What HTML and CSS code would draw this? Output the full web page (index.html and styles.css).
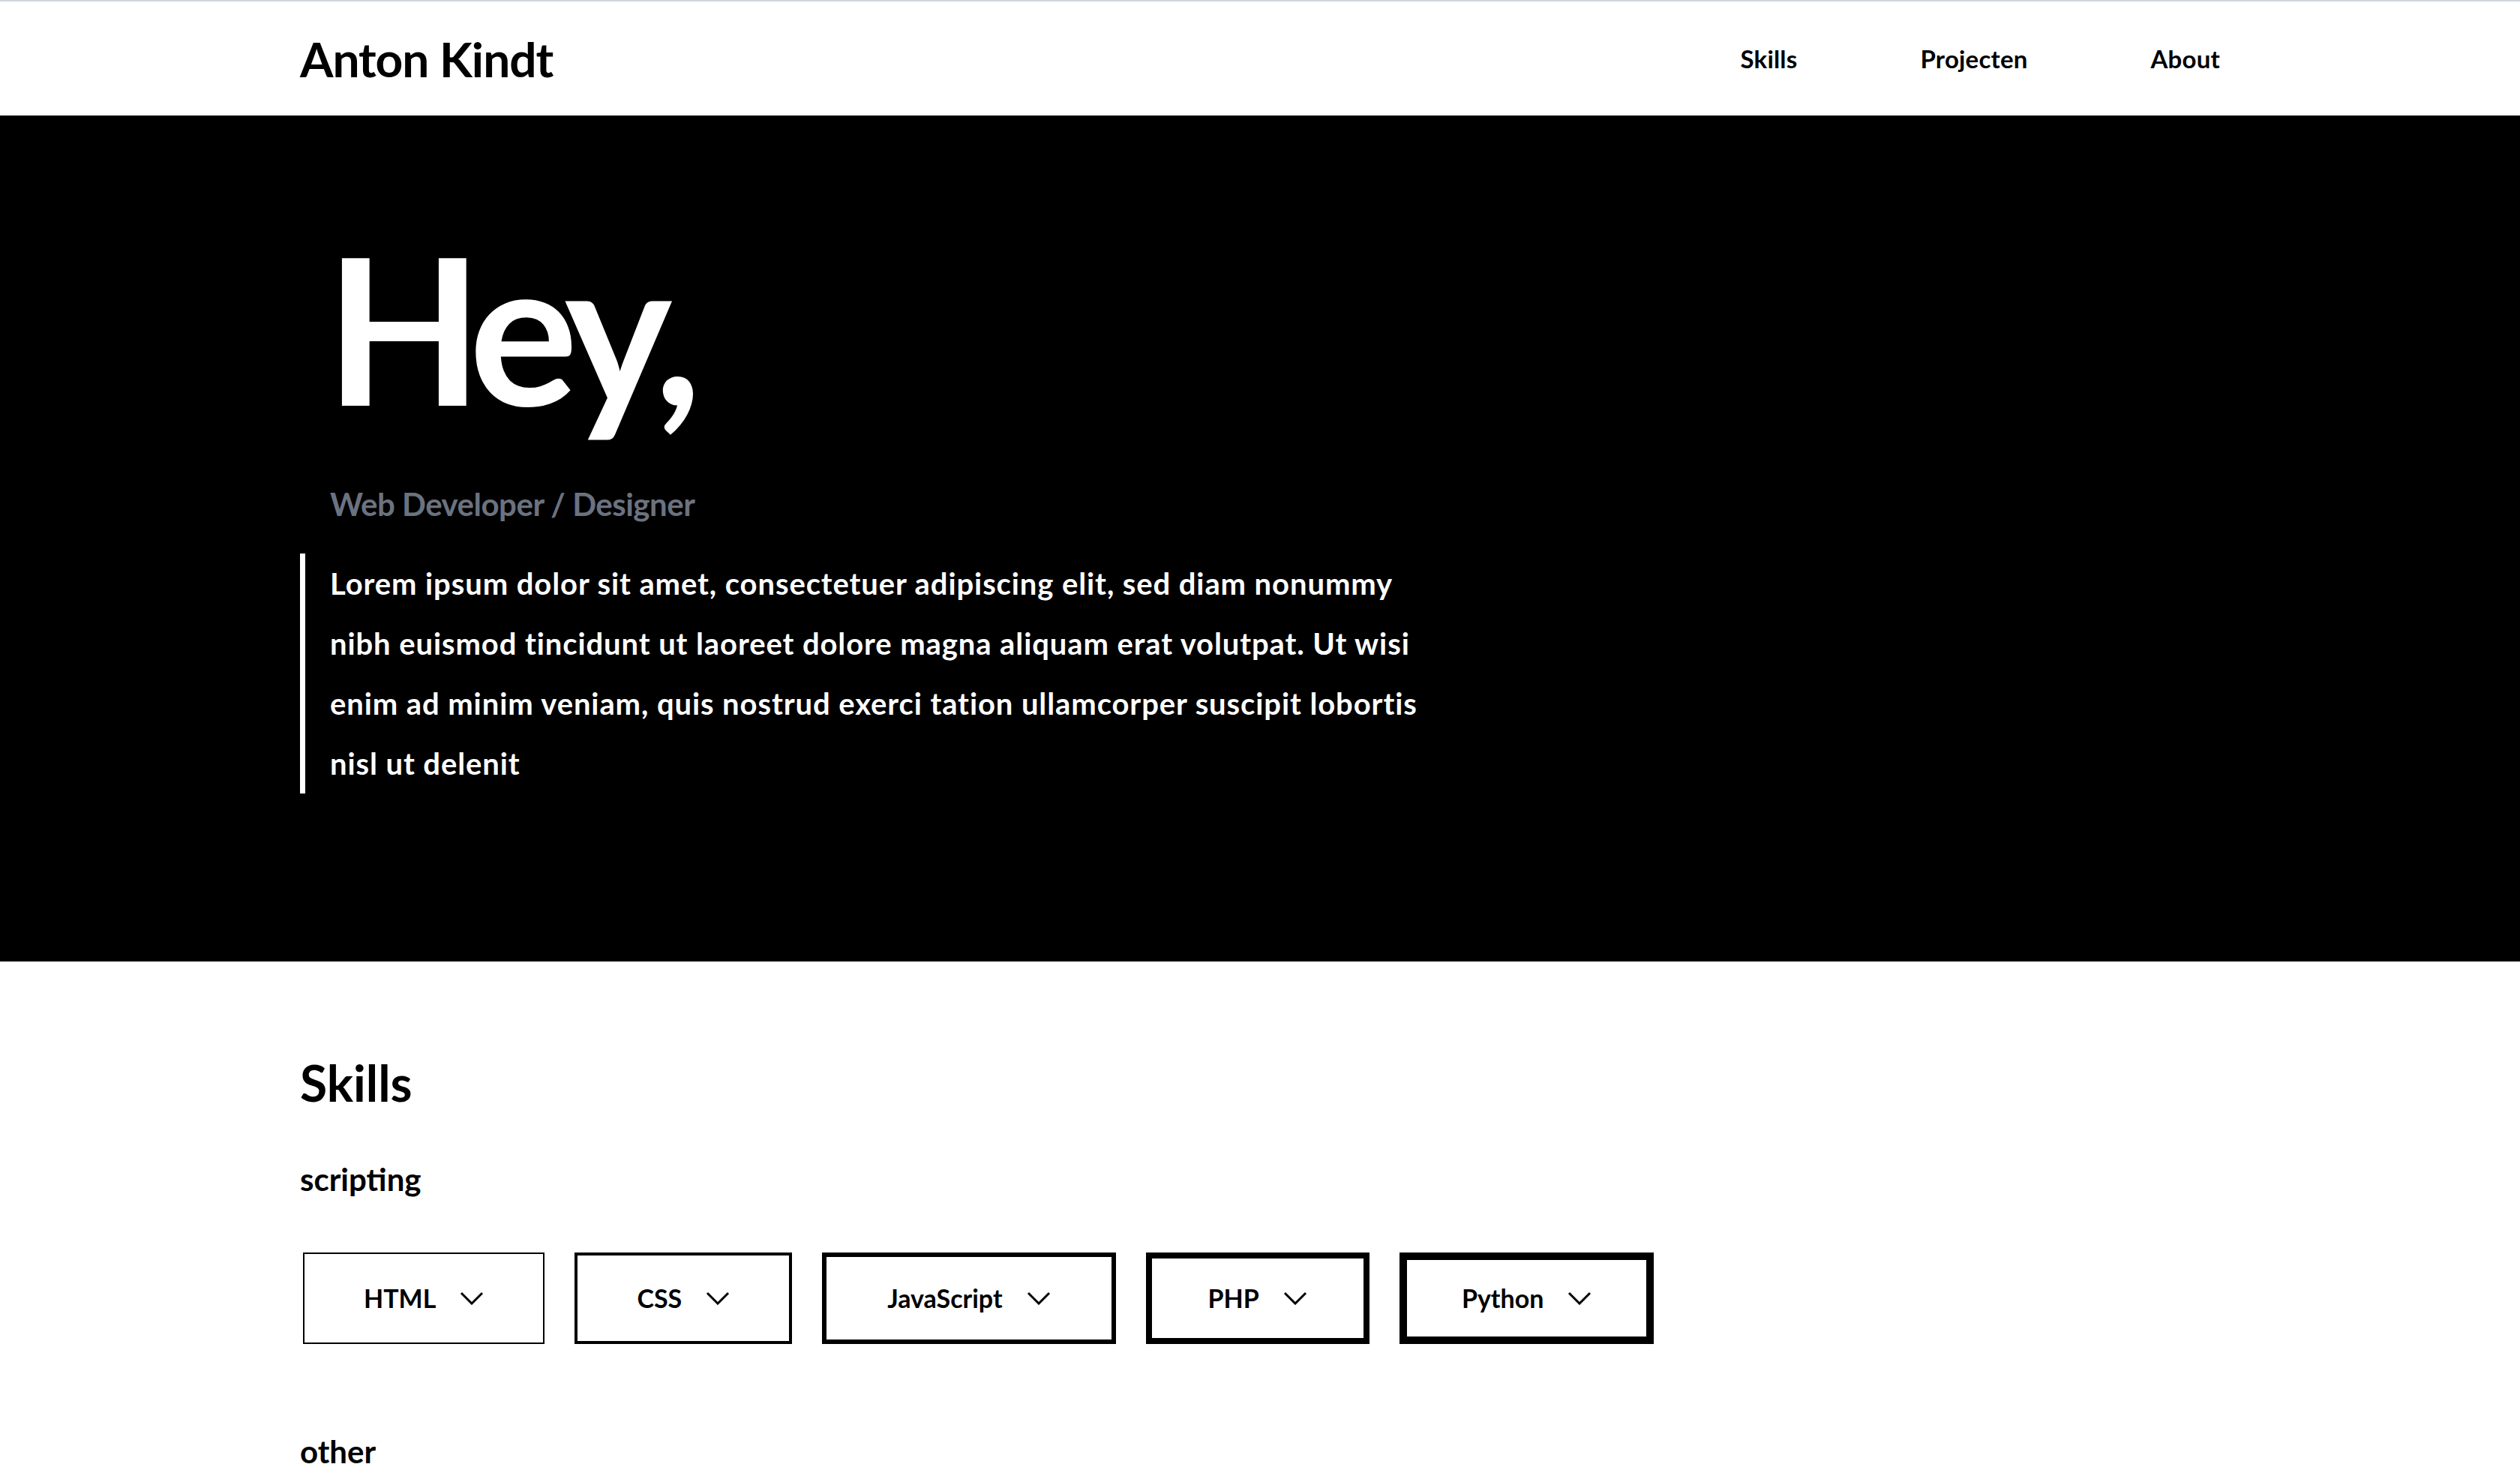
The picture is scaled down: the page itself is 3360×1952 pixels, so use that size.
FILE: index.html
```html
<!DOCTYPE html>
<html lang="nl">
<head>
<meta charset="utf-8">
<title>Anton Kindt</title>
<link rel="stylesheet" href="styles.css">
</head>
<body>
<header class="site-header">
  <div class="container header-inner">
    <a class="logo" href="#">Anton Kindt</a>
    <nav class="nav">
      <a href="#skills">Skills</a>
      <a href="#projecten">Projecten</a>
      <a href="#about">About</a>
    </nav>
  </div>
</header>

<section class="hero">
  <div class="container">
    <h1 class="hero-title">Hey,</h1>
    <p class="hero-sub">Web Developer / Designer</p>
    <blockquote class="hero-quote">
      <p>Lorem ipsum dolor sit amet, consectetuer adipiscing elit, sed diam nonummy nibh euismod tincidunt ut laoreet dolore magna aliquam erat volutpat. Ut wisi enim ad minim veniam, quis nostrud exerci tation ullamcorper suscipit lobortis nisl ut delenit</p>
    </blockquote>
  </div>
</section>

<section class="skills" id="skills">
  <div class="container">
    <h2 class="skills-title">Skills</h2>
    <h3 class="group-title">scripting</h3>
    <div class="skill-row">
      <button class="skill lvl1">HTML <svg class="chev" viewBox="0 0 32 18"><polyline points="2,2 16,16 30,2"/></svg></button>
      <button class="skill lvl2">CSS <svg class="chev" viewBox="0 0 32 18"><polyline points="2,2 16,16 30,2"/></svg></button>
      <button class="skill lvl3">JavaScript <svg class="chev" viewBox="0 0 32 18"><polyline points="2,2 16,16 30,2"/></svg></button>
      <button class="skill lvl4">PHP <svg class="chev" viewBox="0 0 32 18"><polyline points="2,2 16,16 30,2"/></svg></button>
      <button class="skill lvl5">Python <svg class="chev" viewBox="0 0 32 18"><polyline points="2,2 16,16 30,2"/></svg></button>
    </div>
    <h3 class="group-title group-other">other</h3>
  </div>
</section>
</body>
</html>
```

FILE: styles.css
```css
* { box-sizing: border-box; }

html, body {
  margin: 0;
  padding: 0;
  background: #ffffff;
  color: #000000;
  font-family: "Lato", "Open Sans", "Liberation Sans", sans-serif;
}

.container {
  max-width: 2560px;
  margin: 0 auto;
}

a { color: inherit; text-decoration: none; }

/* Header */
.site-header {
  border-top: 2px solid #d1d5db;
  height: 154px;
  background: #fff;
}

.header-inner {
  height: 100%;
  display: flex;
  align-items: center;
  justify-content: space-between;
}

.logo {
  font-size: 64px;
  font-weight: 700;
  letter-spacing: -1px;
}

.nav {
  display: flex;
  gap: 164px;
  font-size: 33px;
  font-weight: 700;
  letter-spacing: 0.2px;
}

/* Hero */
.hero {
  background: #000;
  color: #fff;
  padding: 146px 0 224px;
}

.hero-title {
  margin: 0;
  padding-left: 34px;
  font-size: 272px;
  line-height: 1;
  font-weight: 700;
  letter-spacing: -14px;
}

.hero-sub {
  margin: 75px 0 0;
  padding-left: 40px;
  font-size: 42px;
  line-height: 1.2;
  font-weight: 700;
  letter-spacing: -0.5px;
  color: #6b7280;
}

.hero-quote {
  margin: 41px 0 0;
  border-left: 7px solid #fff;
  padding-left: 33px;
  max-width: 1510px;
}

.hero-quote p {
  margin: 0;
  font-size: 40px;
  line-height: 80px;
  font-weight: 700;
  letter-spacing: 0.9px;
}

/* Skills */
.skills {
  padding-top: 122px;
}

.skills-title {
  margin: 0;
  font-size: 66px;
  line-height: 1.2;
  font-weight: 700;
}

.group-title {
  margin: 63px 0 0;
  font-size: 42px;
  line-height: 1.2;
  font-weight: 700;
}

.skill-row {
  display: flex;
  gap: 40px;
  margin-top: 73px;
  padding-left: 4px;
}

.skill {
  height: 122px;
  display: flex;
  align-items: center;
  gap: 32px;
  padding: 0 81px;
  background: #fff;
  border: 2px solid #000;
  font-family: inherit;
  font-size: 34px;
  font-weight: 700;
  color: #000;
  cursor: pointer;
}

.lvl1 { border-width: 2px; padding: 0 79px; }
.lvl2 { border-width: 4px; padding: 0 79px; }
.lvl3 { border-width: 6px; padding: 0 81px; }
.lvl4 { border-width: 8px; padding: 0 75px; }
.lvl5 { border-width: 10px; padding: 0 73px; }

.chev {
  width: 32px;
  height: 18px;
  fill: none;
  stroke: #000;
  stroke-width: 3;
}

.group-other {
  margin-top: 118px;
}
```
